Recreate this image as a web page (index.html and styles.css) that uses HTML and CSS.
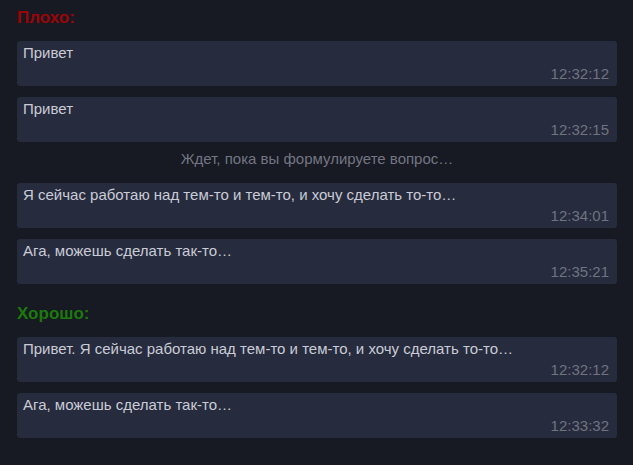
FILE: index.html
```html
<!DOCTYPE html>
<html lang="ru">
<head>
<meta charset="utf-8">
<link rel="stylesheet" href="styles.css">
</head>
<body>
<div class="page">
  <h2 class="label bad">Плохо:</h2>
  <div class="chat">
    <div class="msg"><div class="text">Привет</div><div class="time">12:32:12</div></div>
    <div class="msg"><div class="text">Привет</div><div class="time">12:32:15</div></div>
    <div class="status">Ждет, пока вы формулируете вопрос…</div>
    <div class="msg"><div class="text">Я сейчас работаю над тем-то и тем-то, и хочу сделать то-то…</div><div class="time">12:34:01</div></div>
    <div class="msg"><div class="text">Ага, можешь сделать так-то…</div><div class="time">12:35:21</div></div>
  </div>
  <h2 class="label good">Хорошо:</h2>
  <div class="chat">
    <div class="msg"><div class="text">Привет. Я сейчас работаю над тем-то и тем-то, и хочу сделать то-то…</div><div class="time">12:32:12</div></div>
    <div class="msg"><div class="text">Ага, можешь сделать так-то…</div><div class="time">12:33:32</div></div>
  </div>
</div>
</body>
</html>
```
FILE: styles.css
```css
html, body {
  margin: 0;
  padding: 0;
  background: #171923;
  height: 100%;
}
body {
  font-family: "Liberation Sans", Arial, sans-serif;
}
.page {
  width: 600px;
  padding: 8px 16px 0 17px;
}
.label {
  margin: 0;
  font-size: 17px;
  line-height: 19px;
  font-weight: bold;
}
.bad { color: #9c0508; }
.good { color: #1b7a0c; margin-top: 20px; }
.chat {
  display: flex;
  flex-direction: column;
  gap: 11px;
  margin-top: 14px;
}
.msg {
  background: #272b3e;
  border-radius: 3px;
  padding: 2px 8px 3px 6px;
  font-size: 15px;
  line-height: 19px;
}
.text {
  color: #c9ccd6;
}
.time {
  margin-top: 2px;
  text-align: right;
  color: #6f7380;
}
.status {
  text-align: center;
  color: #737682;
  font-size: 15px;
  line-height: 19px;
  margin: -4px 0 4px;
}
```
